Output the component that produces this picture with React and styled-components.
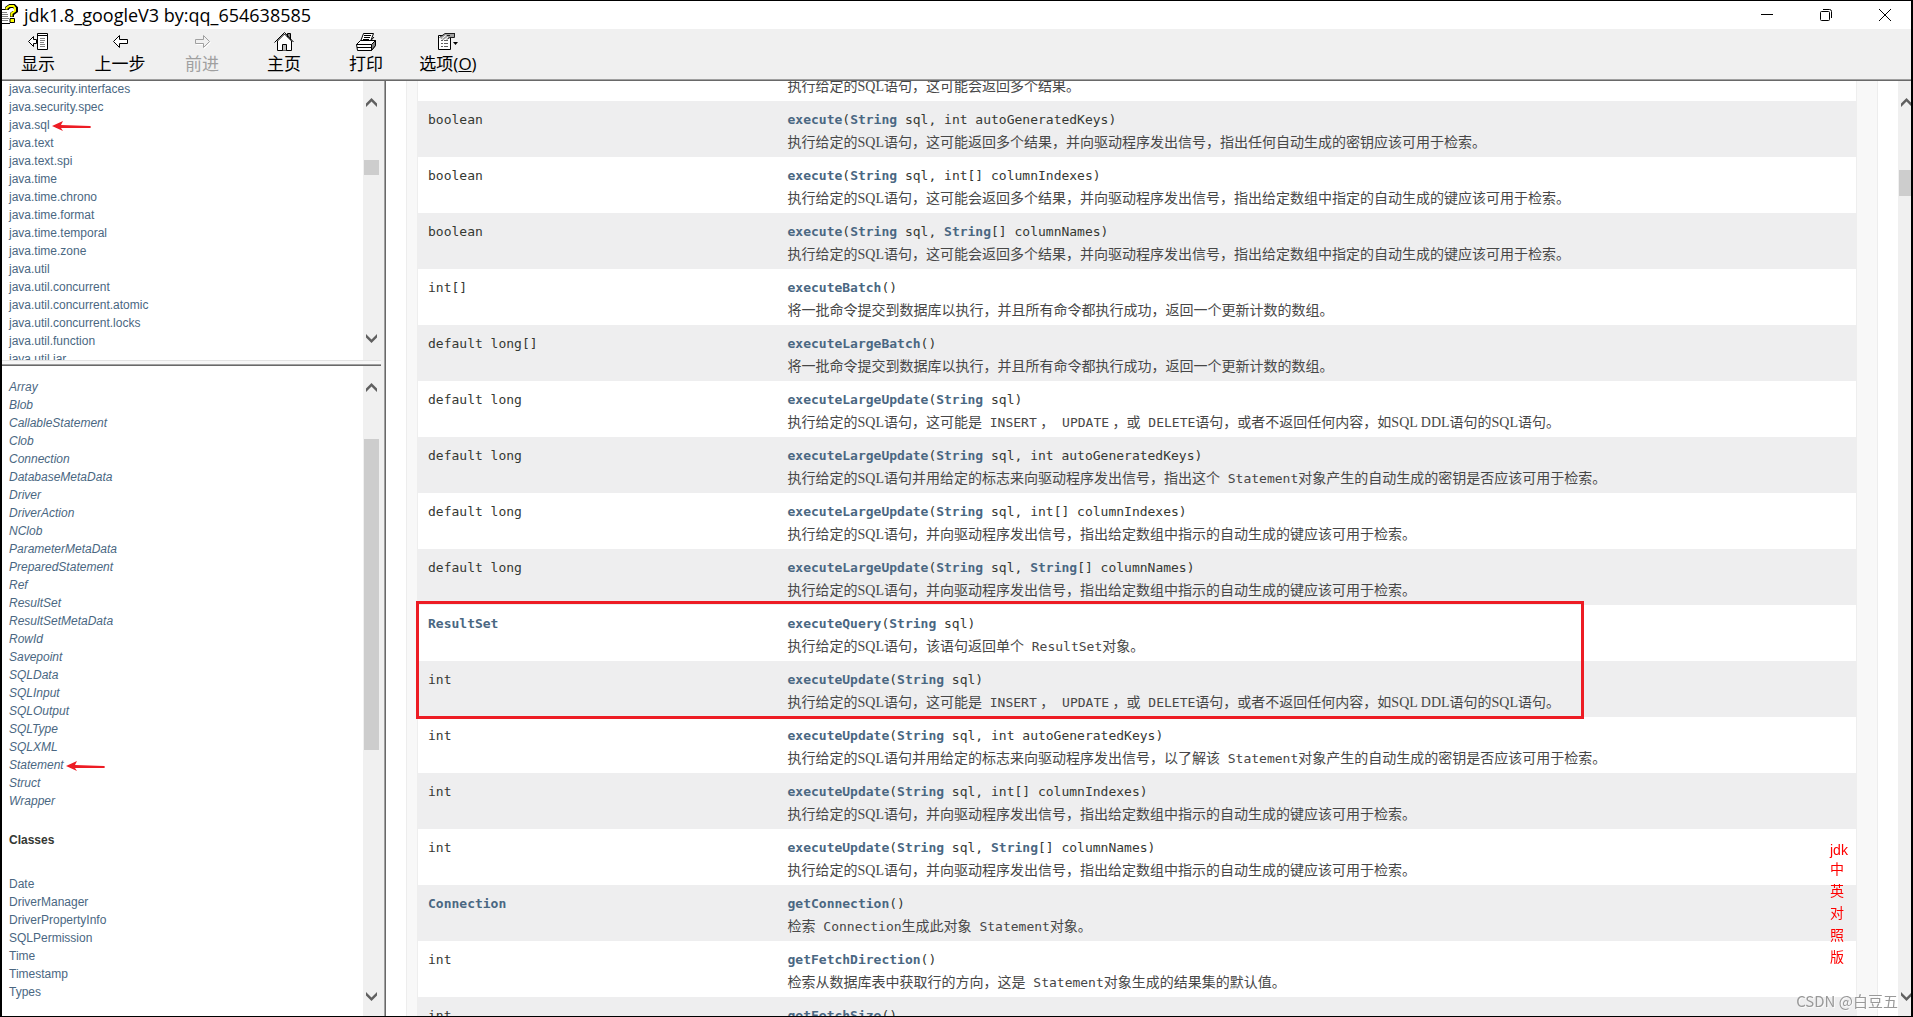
import React, { useLayoutEffect, useRef } from 'react';
import styled, { createGlobalStyle } from 'styled-components';

const ui = '"Open Sans", "Noto Sans CJK SC", sans-serif';
const sans = '"Liberation Sans", "Noto Sans CJK SC", sans-serif';
const serif = '"Liberation Serif", "Noto Sans CJK SC", serif';
const mono = '"DejaVu Sans Mono", "Noto Sans CJK SC", monospace';

const GlobalStyle = createGlobalStyle`
  *, *::before, *::after { box-sizing: border-box; }
  body { margin: 0; background: #000; }
`;

const Window = styled.div`
  display: flex;
  flex-direction: column;
  height: 100vh;
  padding: 1px 2px;
  background: #000;
  overflow: hidden;
`;

const TitleBar = styled.header`
  display: flex;
  align-items: center;
  flex: none;
  height: 28px;
  background: #fff;
`;

const AppIcon = styled.svg`
  flex: none;
  width: 16px;
  height: 22px;
`;

const Title = styled.h1`
  flex: 1;
  margin: 0 0 0 6px;
  font: 400 18px/28px ${ui};
  color: #000;
`;

const WindowButtons = styled.div`
  display: flex;
  gap: 7px;
`;

const WindowButton = styled.button`
  display: flex;
  align-items: center;
  justify-content: center;
  width: 52px;
  height: 28px;
  padding: 0;
  border: 0;
  background: none;
`;

const Toolbar = styled.nav`
  display: flex;
  flex: none;
  gap: 10px;
  height: 52px;
  background: #f0f0f0;
  border-bottom: 1px solid #696969;
  box-shadow: inset 0 -1px 0 #a0a0a0;
`;

const ToolButton = styled.button`
  display: flex;
  flex-direction: column;
  align-items: center;
  width: 72px;
  padding: 3px 0 0;
  border: 0;
  background: none;
  font: 400 17px/24px ${ui};
  color: #000;
  white-space: nowrap;

  &:disabled { color: #a0a0a0; }
`;

const ToolIcon = styled.svg`
  flex: none;
  width: 22px;
  height: 20px;
`;

const Body = styled.div`
  display: flex;
  flex: 1;
  min-height: 0;
`;

const Sidebar = styled.aside`
  display: flex;
  flex-direction: column;
  flex: none;
  width: 384px;
  padding-right: 4px;
  background: #f0f0f0;
  border-right: 1px solid #696969;
  box-shadow: inset -1px 0 0 #a0a0a0;
`;

const Frame = styled.section`
  display: flex;
  flex: ${(p) => (p.$height ? 'none' : '1')};
  height: ${(p) => (p.$height ? p.$height + 'px' : 'auto')};
  min-width: 0;
  min-height: 0;
  background: #fff;
  overflow: hidden;
`;

const Divider = styled.div`
  flex: none;
  height: 6px;
  background: #f7f7f7;
  border-top: 1px solid #e3e3e3;
  border-bottom: 1px solid #696969;
  box-shadow: inset 0 -1px 0 #a0a0a0;
`;

const Viewport = styled.div`
  position: relative;
  flex: 1;
  min-width: 0;
  overflow: hidden;
`;

const Track = styled.div`
  display: flex;
  flex: none;
  width: ${(p) => p.$width}px;
  padding-left: 1px;
  background: #f0f0f0;
  overflow: hidden;
`;

const Rail = styled.div`
  display: flex;
  flex-direction: column;
  align-items: center;
  flex: none;
  width: 15px;
  padding: ${(p) => p.$pad};
`;

const ArrowButton = styled.button`
  flex: none;
  width: 11px;
  height: 9px;
  padding: 0;
  border: 0;
  background: none;
  line-height: 0;
`;

const Thumb = styled.div`
  flex: none;
  width: 15px;
  height: ${(p) => p.$size}px;
  margin: ${(p) => p.$offset}px 0 auto;
  background: #cdcdcd;
`;

const LinkList = styled.ul`
  margin: 0;
  padding: 0;
  list-style: none;
  font: ${(p) => (p.$italic ? 'italic' : 'normal')} 400 12px/18px ${sans};

  li { white-space: nowrap; }
`;

const Link = styled.a`
  color: #4a6782;
  text-decoration: none;
  font-weight: ${(p) => (p.$strong ? 700 : 'inherit')};
`;

const Index = styled.div`
  padding: ${(p) => (p.$top ? '12px' : '0')} 7px 12px;
`;

const IndexHeading = styled.h2`
  margin: 21px 0 26px;
  font: 700 12px/18px ${sans};
  color: #353833;
`;

const Marked = styled.span`
  position: relative;
`;

const Pointer = styled.svg`
  position: absolute;
  left: 100%;
  top: 2px;
  width: 42px;
  height: 12px;
`;

const Page = styled.div`
  margin: 0 20px;
  padding: 0 21px 0 11px;
  background: #f8f8f8;
  border: 1px solid #ededed;
  border-width: 0 1px;
`;

const MethodTable = styled.table`
  width: 100%;
  table-layout: fixed;
  border-collapse: collapse;
  background: #fff;
  box-shadow: -1px 0 0 #eee, 1px 0 0 #eee;
`;

const Row = styled.tr`
  height: 56px;
  background: ${(p) => (p.$alt ? '#eeeeef' : '#fff')};
`;

const Cell = styled.td`
  width: ${(p) => (p.$narrow ? '25%' : 'auto')};
  padding: 9px 10px 4px;
  vertical-align: top;
  text-align: left;
`;

const Code = styled.code`
  display: ${(p) => (p.$inline ? 'inline' : 'block')};
  font-family: ${mono};
  font-size: 13px;
  line-height: 20px;
  color: ${(p) => (p.$inline ? 'inherit' : '#353833')};
  white-space: pre;
`;

const Description = styled.div`
  height: 20px;
  margin-top: 3px;
  font: 400 14px/20px ${serif};
  color: #474747;
  white-space: nowrap;
`;

const Highlight = styled.div`
  position: absolute;
  left: 30px;
  right: 314px;
  top: 556px;
  height: 118px;
  border: 3px solid #ed1c24;
  pointer-events: none;
`;

const SideNote = styled.div`
  position: fixed;
  right: 64px;
  bottom: 49px;
  width: 19px;
  font: 400 14px/22px ${sans};
  color: #f00;

  span { display: block; }
  span:first-child { line-height: 16px; }
`;

const Watermark = styled.div`
  position: fixed;
  right: 15px;
  bottom: 5px;
  font: 400 15px/22px "Noto Sans CJK SC", sans-serif;
  color: #999;
  text-shadow: 1px 1px 0 rgba(255, 255, 255, 0.7);
`;

const packages = [
  'java.security.interfaces', 'java.security.spec', 'java.sql', 'java.text', 'java.text.spi',
  'java.time', 'java.time.chrono', 'java.time.format', 'java.time.temporal', 'java.time.zone',
  'java.util', 'java.util.concurrent', 'java.util.concurrent.atomic', 'java.util.concurrent.locks',
  'java.util.function', 'java.util.jar',
];

const interfaces = [
  'Array', 'Blob', 'CallableStatement', 'Clob', 'Connection', 'DatabaseMetaData', 'Driver',
  'DriverAction', 'NClob', 'ParameterMetaData', 'PreparedStatement', 'Ref', 'ResultSet',
  'ResultSetMetaData', 'RowId', 'Savepoint', 'SQLData', 'SQLInput', 'SQLOutput', 'SQLType',
  'SQLXML', 'Statement', 'Struct', 'Wrapper',
];

const classes = ['Date', 'DriverManager', 'DriverPropertyInfo', 'SQLPermission', 'Time', 'Timestamp', 'Types'];

// In descriptions, text between backticks is set as code, with its leading space.
const updateText = '执行给定的SQL语句，这可能是` INSERT` ，` UPDATE` ，或` DELETE`语句，或者不返回任何内容，如SQL DDL语句的SQL语句。';
const keysText = '执行给定的SQL语句，并向驱动程序发出信号，指出给定数组中指示的自动生成的键应该可用于检索。';
const executeText = '执行给定的SQL语句，这可能会返回多个结果，并向驱动程序发出信号，指出给定数组中指定的自动生成的键应该可用于检索。';
const batchText = '将一批命令提交到数据库以执行，并且所有命令都执行成功，返回一个更新计数的数组。';

const methods = [
  ['boolean', 'execute', 'String sql', '执行给定的SQL语句，这可能会返回多个结果。'],
  ['boolean', 'execute', 'String sql, int autoGeneratedKeys', '执行给定的SQL语句，这可能返回多个结果，并向驱动程序发出信号，指出任何自动生成的密钥应该可用于检索。'],
  ['boolean', 'execute', 'String sql, int[] columnIndexes', executeText],
  ['boolean', 'execute', 'String sql, String[] columnNames', executeText],
  ['int[]', 'executeBatch', '', batchText],
  ['default long[]', 'executeLargeBatch', '', batchText],
  ['default long', 'executeLargeUpdate', 'String sql', updateText],
  ['default long', 'executeLargeUpdate', 'String sql, int autoGeneratedKeys', '执行给定的SQL语句并用给定的标志来向驱动程序发出信号，指出这个` Statement`对象产生的自动生成的密钥是否应该可用于检索。'],
  ['default long', 'executeLargeUpdate', 'String sql, int[] columnIndexes', keysText],
  ['default long', 'executeLargeUpdate', 'String sql, String[] columnNames', keysText],
  ['ResultSet', 'executeQuery', 'String sql', '执行给定的SQL语句，该语句返回单个` ResultSet`对象。'],
  ['int', 'executeUpdate', 'String sql', updateText],
  ['int', 'executeUpdate', 'String sql, int autoGeneratedKeys', '执行给定的SQL语句并用给定的标志来向驱动程序发出信号，以了解该` Statement`对象产生的自动生成的密钥是否应该可用于检索。'],
  ['int', 'executeUpdate', 'String sql, int[] columnIndexes', keysText],
  ['int', 'executeUpdate', 'String sql, String[] columnNames', keysText],
  ['Connection', 'getConnection', '', '检索` Connection`生成此对象` Statement`对象。'],
  ['int', 'getFetchDirection', '', '检索从数据库表中获取行的方向，这是` Statement`对象生成的结果集的默认值。'],
  ['int', 'getFetchSize', '', ''],
];

const linkedTypes = /(String|ResultSet|Connection)/;

function TypedText({ text }) {
  return text.split(linkedTypes).map((part, i) =>
    i % 2 ? <Link key={i} href="#" $strong>{part}</Link> : part
  );
}

function RichText({ text }) {
  return text.split('`').map((part, i) => (i % 2 ? <Code key={i} $inline>{part}</Code> : part));
}

function ScrollArea({ top = 0, children }) {
  const ref = useRef(null);
  useLayoutEffect(() => {
    ref.current.scrollTop = top;
  }, [top]);
  return <Viewport ref={ref}>{children}</Viewport>;
}

function Chevron({ down }) {
  return (
    <svg width="11" height="9" viewBox="0 0 11 9">
      <path d={down ? 'M0 0 5.500 5.500 11 0V3.500L5.500 9 0 3.500Z' : 'M0 9 5.500 3.500 11 9V5.500L5.500 0 0 5.500Z'} fill="#606060" />
    </svg>
  );
}

function ScrollBar({ width = 18, pad = '17px 0 15px', offset, size }) {
  return (
    <Track $width={width}>
      <Rail $pad={pad}>
        <ArrowButton aria-label="Scroll up"><Chevron /></ArrowButton>
        <Thumb $offset={offset} $size={size} />
        <ArrowButton aria-label="Scroll down"><Chevron down /></ArrowButton>
      </Rail>
    </Track>
  );
}

function RedArrow() {
  return (
    <Pointer viewBox="0 0 42 12" aria-hidden="true">
      <path d="M2 6 13 1 11 5 40 6Q42 7 40 8L11 8 13 11Z" fill="#ed1c24" />
    </Pointer>
  );
}

function Links({ names, italic, marked }) {
  return (
    <LinkList $italic={italic}>
      {names.map((name) => (
        <li key={name}>
          <Marked>
            <Link href="#">{name}</Link>
            {name === marked && <RedArrow />}
          </Marked>
        </li>
      ))}
    </LinkList>
  );
}

const icons = {
  show: (
    <>
      <path d="M1.500 9.500 6.500 4.500V7.500H9.500V11.500H6.500V14.500Z" fill="#fff" stroke="#000" />
      <path d="M10.500 1.500H20.500V17.500H10.500Z" fill="#fff" stroke="#000" />
      <path d="M10 3.500H21" stroke="#000" />
      <path d="M13 6.500H18M13 8.500H18M13 10.500H17M13 12.500H18M13 14.500H18" stroke="#808080" />
    </>
  ),
  back: <path d="M4.500 9.500 10.500 3.500V7.500H18.500V11.500H10.500V15.500Z" fill="#fff" stroke="#000" />,
  forward: (
    <>
      <path d="M19.500 10.500 13.500 4.500V8.500H5.500V12.500H13.500V16.500Z" fill="none" stroke="#fff" />
      <path d="M18.500 9.500 12.500 3.500V7.500H4.500V11.500H12.500V15.500Z" fill="#f0f0f0" stroke="#a0a0a0" />
    </>
  ),
  home: (
    <>
      <path d="M14.500 6V1.500H17.500V8" fill="#808080" stroke="#000" />
      <path d="M4.500 9V18.500H18.500V9L11.500 2Z" fill="#fff" stroke="#000" />
      <path d="M1.500 10.500 11.500 .5 20.500 10" fill="none" stroke="#000" />
      <path d="M9.500 18.500V12.500H13.500V18.500" fill="#c0c0c0" stroke="#000" />
    </>
  ),
  print: (
    <>
      <path d="M5.500 9.500 8.500 1.500H18.500L15.500 9.500Z" fill="#fff" stroke="#000" />
      <path d="M9 3.500H16M9 5.500H15M8 7.500H14" stroke="#000" />
      <path d="M1.500 12.500 5.500 8.500H20.500V13.500L16.500 18.500H2.500Z" fill="#fff" stroke="#000" />
      <path d="M16.500 12.500 20.500 8.500V13.500L16.500 18.500Z" fill="#808080" stroke="#000" />
      <path d="M1.500 12.500H16.500M2 15.500H16M15.500 9 19 5" stroke="#000" />
    </>
  ),
  options: (
    <>
      <path d="M1.500 3.500H13.500V17.500H1.500Z" fill="#fff" stroke="#000" />
      <path d="M4 8.500H6M7 8.500H11M4 11.500H6M7 11.500H11M4 14.500H6M7 14.500H11" stroke="#606060" />
      <path d="M3 6 8 1.500H17V5.500H13L10 8 8.500 6.500 6 8Z" fill="#a0a0a0" />
      <path d="M2.500 5.500 8 1.500H17M10 3.500H13M11 6.500 13 5.500H17.500V1" fill="none" stroke="#202020" />
      <path d="M5 6.500 9 3.500M8 7.500 11 5" stroke="#fff" />
      <path d="M16 10H21L18.500 13Z" fill="#000" />
    </>
  ),
};

function Tool({ icon, disabled, children }) {
  return (
    <ToolButton disabled={disabled}>
      <ToolIcon viewBox="0 0 22 20" aria-hidden="true">{icons[icon]}</ToolIcon>
      <span>{children}</span>
    </ToolButton>
  );
}

export default function App() {
  return (
    <Window>
      <GlobalStyle />
      <TitleBar>
        <AppIcon viewBox="0 0 16 22" aria-hidden="true">
          <path d="M0 5H8V19H0Z" fill="#fff" />
          <path d="M0 5.500H4M0 19.500H8" stroke="#000" />
          <path d="M0 8.500H5M0 10.500H6M0 12.500H6M0 14.500H7M0 16.500H6" stroke="#808080" />
          <path d="M5 6V4L8 2H12L14 4V7L10 10V13" fill="none" stroke="#000" strokeWidth="4" />
          <path d="M4.500 5.500V4L7.500 2H11.500L13 4V7L9.500 9.500V12.500" fill="none" stroke="#ff0" strokeWidth="2" />
          <path d="M8 14.500H12.500V18.500H8Z" fill="#ff0" stroke="#000" />
        </AppIcon>
        <Title>jdk1.8_googleV3 by:qq_654638585</Title>
        <WindowButtons>
          <WindowButton aria-label="Minimize">
            <svg width="12" height="12"><path d="M0 5.500H12" stroke="#000" /></svg>
          </WindowButton>
          <WindowButton aria-label="Restore">
            <svg width="12" height="12" fill="none" stroke="#000">
              <rect x=".5" y="2.500" width="9" height="9" rx="1" />
              <path d="M3 .500H9.500Q11.500 .500 11.500 2.500V9" />
            </svg>
          </WindowButton>
          <WindowButton aria-label="Close">
            <svg width="12" height="12"><path d="M0 0 12 12M12 0 0 12" stroke="#000" /></svg>
          </WindowButton>
        </WindowButtons>
      </TitleBar>
      <Toolbar>
        <Tool icon="show">显示</Tool>
        <Tool icon="back">上一步</Tool>
        <Tool icon="forward" disabled>前进</Tool>
        <Tool icon="home">主页</Tool>
        <Tool icon="print">打印</Tool>
        <Tool icon="options">选项(<u>O</u>)</Tool>
      </Toolbar>
      <Body>
        <Sidebar>
          <Frame $height={279}>
            <ScrollArea top={1}>
              <Index><Links names={packages} marked="java.sql" /></Index>
            </ScrollArea>
            <ScrollBar pad="17px 0" offset={53} size={15} />
          </Frame>
          <Divider />
          <Frame>
            <ScrollArea>
              <Index $top>
                <Links names={interfaces} italic marked="Statement" />
                <IndexHeading>Classes</IndexHeading>
                <Links names={classes} />
              </Index>
            </ScrollArea>
            <ScrollBar offset={47} size={311} />
          </Frame>
        </Sidebar>
        <Frame as="main">
          <ScrollArea top={36}>
            <Page>
              <MethodTable>
                <tbody>
                  {methods.map(([type, name, params, text], i) => (
                    <Row key={i} $alt={i % 2 === 1}>
                      <Cell $narrow><Code><TypedText text={type} /></Code></Cell>
                      <Cell>
                        <Code>
                          <Link href="#" $strong>{name}</Link>(<TypedText text={params} />)
                        </Code>
                        <Description><RichText text={text} /></Description>
                      </Cell>
                    </Row>
                  ))}
                </tbody>
              </MethodTable>
            </Page>
            <Highlight />
          </ScrollArea>
          <ScrollBar width={13} offset={63} size={26} />
        </Frame>
      </Body>
      <SideNote>
        <span>jdk</span>
        <span>中</span>
        <span>英</span>
        <span>对</span>
        <span>照</span>
        <span>版</span>
      </SideNote>
      <Watermark>CSDN @白豆五</Watermark>
    </Window>
  );
}
